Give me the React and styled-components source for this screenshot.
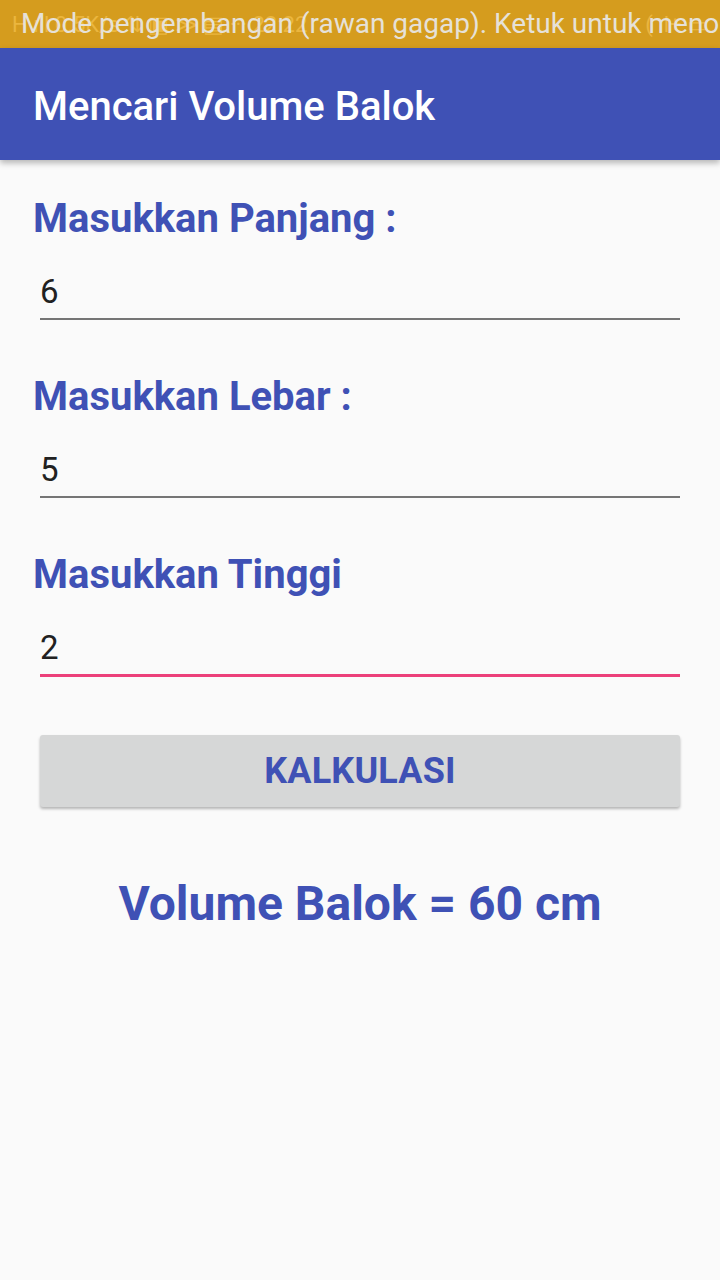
import React, { useState } from 'react';
import styled, { createGlobalStyle } from 'styled-components';

const GlobalStyle = createGlobalStyle`
    html, body {
        margin: 0;
        padding: 0;
        background-color: #FAFAFA;
    }
    * {
        box-sizing: border-box;
    }
`;

const Screen = styled.div`
    width: 720px;
    min-height: 1280px;
    background-color: #FAFAFA;
    font-family: Roboto, "Noto Sans", sans-serif;
    overflow: hidden;
`;

const StatusBar = styled.div`
    position: relative;
    height: 48px;
    background-color: #D59C1E;
    overflow: hidden;
    white-space: nowrap;
`;

const StatusIcons = styled.div`
    position: absolute;
    inset: 0;
    display: flex;
    align-items: center;
    justify-content: space-between;
    padding: 0 12px;
    font-size: 22px;
    color: #EBB63F;
`;

const StatusMessage = styled.div`
    position: relative;
    padding: 6px 0 0 21px;
    font-size: 28px;
    line-height: 36px;
    color: #E6E1D8;
`;

const AppBar = styled.header`
    position: relative;
    height: 112px;
    background-color: #3F51B5;
    display: flex;
    align-items: center;
    padding: 0 33px;
    box-shadow: 0 3px 6px rgba(0, 0, 0, 0.28);
    z-index: 1;
`;

const AppTitle = styled.h1`
    margin: 0;
    font-size: 40px;
    font-weight: 500;
    color: #FFFFFF;
    padding-top: 4px;
`;

const Content = styled.main`
    display: flex;
    flex-direction: column;
    padding: 38px 40px 0 33px;
`;

const Field = styled.div`
    display: flex;
    flex-direction: column;
    margin-bottom: 56px;
`;

const Label = styled.label`
    font-size: 40px;
    line-height: 42px;
    font-weight: 700;
    color: #3F51B5;
`;

const Input = styled.input`
    margin: 32px 0 0 7px;
    width: 640px;
    border: none;
    border-bottom: ${(p) => (p.$focused ? '3px solid #EC407A' : '2px solid #757575')};
    background: transparent;
    font-family: Roboto, "Noto Sans", sans-serif;
    font-size: 33px;
    line-height: 38px;
    height: ${(p) => (p.$focused ? '49px' : '48px')};
    padding: 0 0 8px 0;
    color: #212121;
    outline: none;
`;

const Button = styled.button`
    margin: 2px 0 0 7px;
    width: 640px;
    height: 72px;
    border: none;
    border-radius: 3px;
    background-color: #D6D7D7;
    box-shadow: 0 2px 3px rgba(0, 0, 0, 0.28);
    font-family: Roboto, "Noto Sans", sans-serif;
    font-size: 36px;
    font-weight: 700;
    color: #3F51B5;
    letter-spacing: 0.2px;
`;

const Result = styled.div`
    margin-top: 68px;
    padding-left: 7px;
    text-align: center;
    font-size: 48px;
    font-weight: 700;
    color: #3F51B5;
`;

const fields = [
    { label: 'Masukkan Panjang :', value: '6' },
    { label: 'Masukkan Lebar :', value: '5' },
    { label: 'Masukkan Tinggi', value: '2', focused: true },
];

export default function App() {
    const [values, setValues] = useState(fields.map((f) => f.value));

    const volume = values.reduce((acc, v) => acc * (parseFloat(v) || 0), 1);

    const updateValue = (index, value) => {
        const next = [...values];
        next[index] = value;
        setValues(next);
    };

    return (
        <>
            <GlobalStyle />
            <Screen>
                <StatusBar>
                    <StatusIcons>
                        <span>H ıll 0.5K/s ⇅ ▣ ≫ ▤ ··· 22:22</span>
                        <span>( ıl+ ▭</span>
                    </StatusIcons>
                    <StatusMessage>Mode pengembangan (rawan gagap). Ketuk untuk menonaktifkan</StatusMessage>
                </StatusBar>
                <AppBar>
                    <AppTitle>Mencari Volume Balok</AppTitle>
                </AppBar>
                <Content>
                    {fields.map((field, i) => (
                        <Field key={field.label}>
                            <Label>{field.label}</Label>
                            <Input
                                type="text"
                                value={values[i]}
                                $focused={field.focused}
                                onChange={(e) => updateValue(i, e.target.value)}
                            />
                        </Field>
                    ))}
                    <Button>KALKULASI</Button>
                    <Result>Volume Balok = {volume} cm</Result>
                </Content>
            </Screen>
        </>
    );
}
